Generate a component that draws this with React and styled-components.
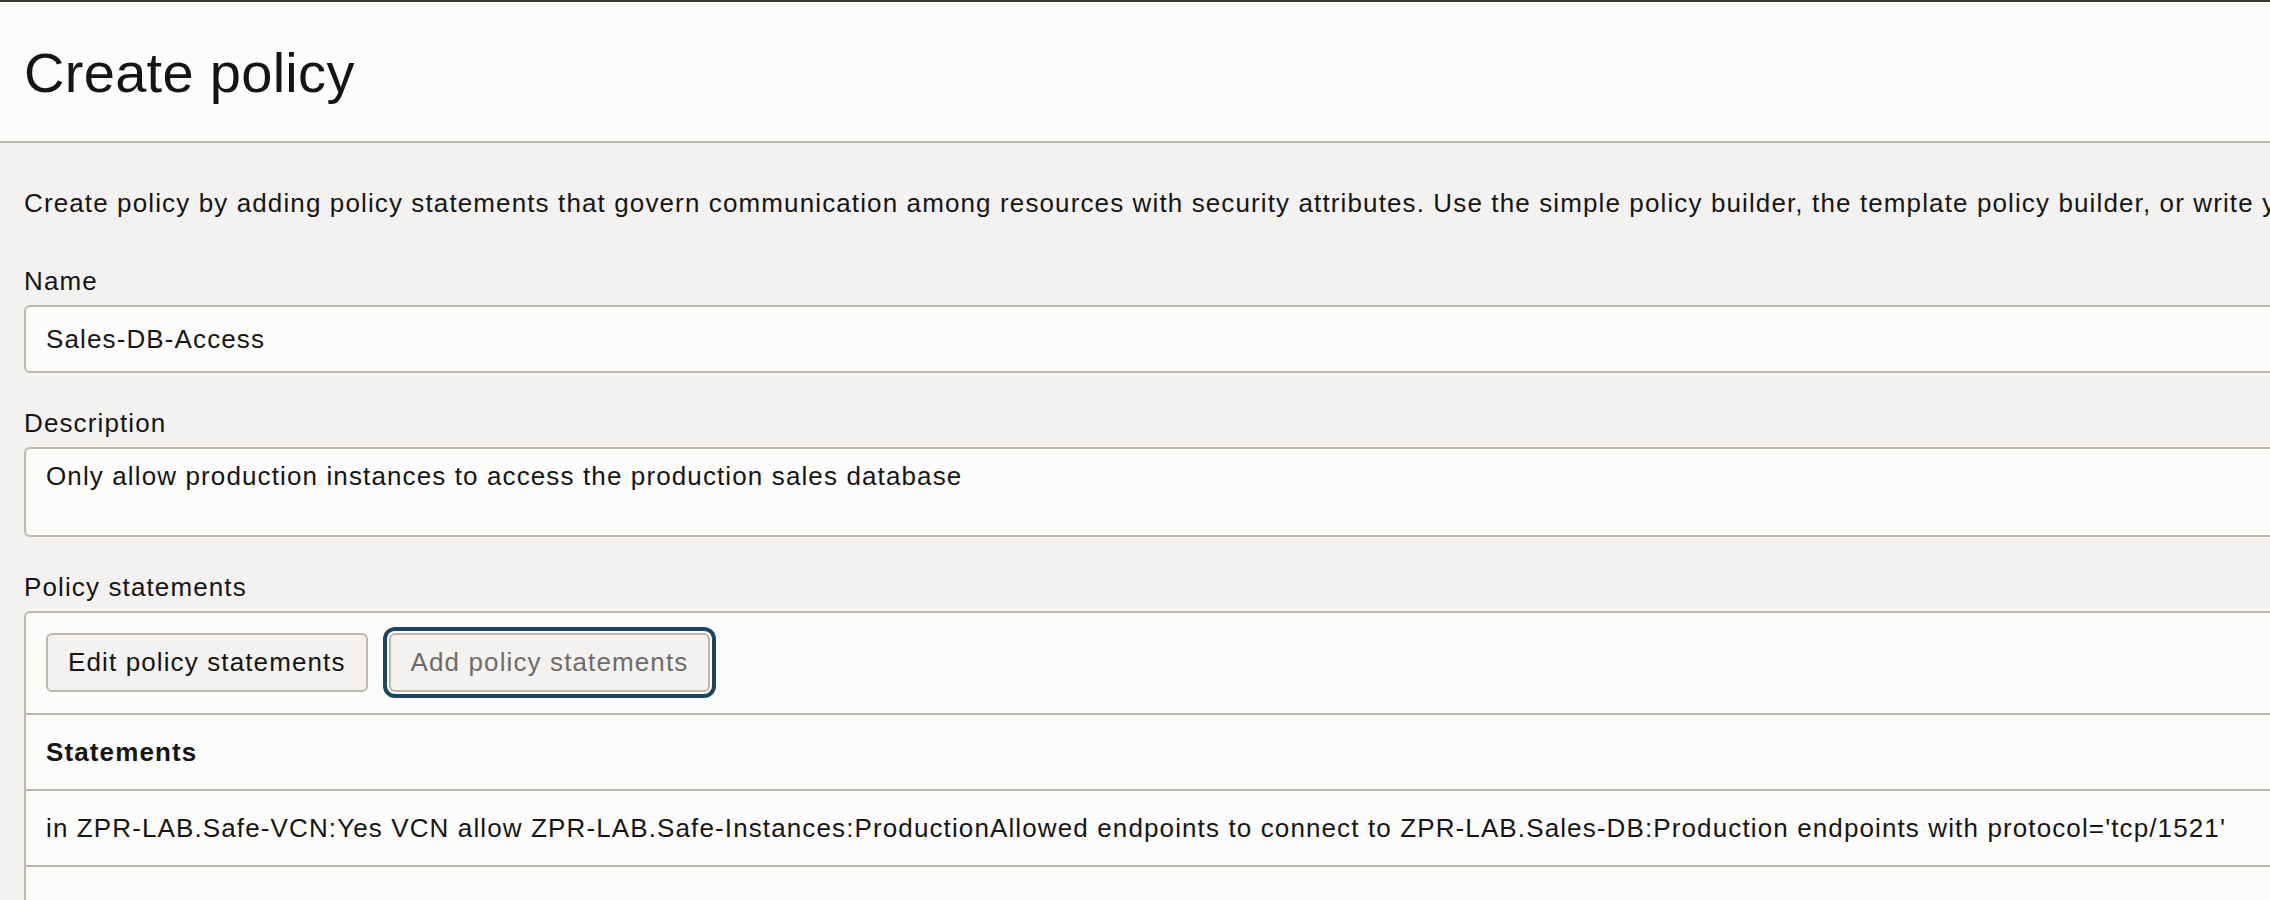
import React from "react";
import styled, { createGlobalStyle } from "styled-components";

const GlobalStyle = createGlobalStyle`
  html, body {
    margin: 0;
    padding: 0;
    background: #f3f2f1;
    overflow: hidden;
  }
  body {
    font-family: "Liberation Sans", Arial, sans-serif;
    color: #161513;
  }
`;

const Page = styled.div`
  width: 2600px;
  min-height: 900px;
  border-top: 2px solid #3b3732;
  background: #f3f2f1;
`;

const Header = styled.header`
  height: 139px;
  display: flex;
  align-items: center;
  padding: 0 24px;
  background: #fcfcfb;
  border-bottom: 2px solid #bdb7b0;
`;

const Title = styled.h1`
  margin: 0;
  font-size: 56px;
  font-weight: 400;
  line-height: 56px;
  letter-spacing: 0.3px;
  transform: translateY(1px);
`;

const Content = styled.main`
  padding: 44px 24px 0;
  font-size: 26px;
  letter-spacing: 1.12px;
`;

const Intro = styled.p`
  margin: 0 0 46px;
  line-height: 32px;
  white-space: nowrap;
`;

const Field = styled.div`
  margin-bottom: ${(p) => p.$gap ?? 34}px;
`;

const Label = styled.label`
  display: block;
  margin-bottom: 8px;
  line-height: 32px;
`;

const TextBox = styled.div`
  box-sizing: border-box;
  height: ${(p) => p.$height}px;
  display: flex;
  align-items: ${(p) => (p.$multiline ? "flex-start" : "center")};
  padding: ${(p) => (p.$multiline ? "11px 20px" : "0 20px")};
  background: #fcfcfb;
  border: 2px solid #bdb7b0;
  border-radius: 6px;
  line-height: 32px;
`;

const Panel = styled.section`
  background: #fcfcfb;
  border: 2px solid #bdb7b0;
  border-bottom: none;
  border-radius: 6px 6px 0 0;
  min-height: 300px;
`;

const Toolbar = styled.div`
  display: flex;
  gap: 21px;
  padding: 20px 20px 21px;
  border-bottom: 2px solid #bdb7b0;
`;

const Button = styled.button`
  box-sizing: border-box;
  height: 59px;
  padding: 0 20px;
  font-family: inherit;
  font-size: 26px;
  letter-spacing: 1.12px;
  color: ${(p) => (p.$muted ? "#6f6b66" : "#161513")};
  background: #f3f2f0;
  border: 2px solid #bdb7b0;
  border-radius: 6px;
  box-shadow: ${(p) =>
    p.$focused ? "0 0 0 2px #fcfcfb, 0 0 0 6px #1c4660" : "none"};
  cursor: pointer;
`;

const Row = styled.div`
  height: 74px;
  display: flex;
  align-items: center;
  padding: 0 20px;
  border-bottom: 2px solid #bdb7b0;
  font-weight: ${(p) => (p.$head ? 700 : 400)};
  white-space: nowrap;
`;

export default function App() {
  return (
    <>
      <GlobalStyle />
      <Page>
        <Header>
          <Title>Create policy</Title>
        </Header>
        <Content>
          <Intro>
            Create policy by adding policy statements that govern communication
            among resources with security attributes. Use the simple policy
            builder, the template policy builder, or write your own policy
            statements.
          </Intro>
          <Field>
            <Label>Name</Label>
            <TextBox $height={68}>Sales-DB-Access</TextBox>
          </Field>
          <Field>
            <Label>Description</Label>
            <TextBox $height={90} $multiline>
              Only allow production instances to access the production sales
              database
            </TextBox>
          </Field>
          <Field $gap={0}>
            <Label>Policy statements</Label>
            <Panel>
              <Toolbar>
                <Button>Edit policy statements</Button>
                <Button $muted $focused>
                  Add policy statements
                </Button>
              </Toolbar>
              <Row $head>Statements</Row>
              <Row>
                in ZPR-LAB.Safe-VCN:Yes VCN allow
                ZPR-LAB.Safe-Instances:ProductionAllowed endpoints to connect to
                ZPR-LAB.Sales-DB:Production endpoints with protocol='tcp/1521'
              </Row>
            </Panel>
          </Field>
        </Content>
      </Page>
    </>
  );
}
